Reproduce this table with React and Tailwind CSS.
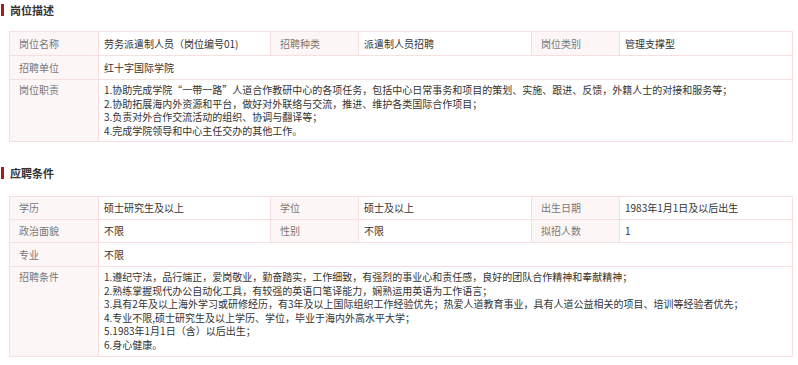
const font = "font-['Microsoft_YaHei','Noto_Sans_CJK_SC',sans-serif]";

function Title({ children }) {
  return (
    <div className="flex items-center h-5 pl-[1px]">
      <span className="w-[3px] h-3 bg-[#a51d1d]" />
      <span className="ml-[6px] text-[11px] font-bold text-[#333]">{children}</span>
    </div>
  );
}

function Label({ children, h, top }) {
  return (
    <div
      className={`flex ${top ? 'items-start pt-[3px]' : 'items-center'} pl-[9px] bg-[#fdf6f6] border-r border-b border-[#f8dfdf] text-[#777] ${h}`}
    >
      {children}
    </div>
  );
}

function Value({ children, h, span, top }) {
  return (
    <div
      className={`flex ${top ? 'flex-col pt-[3px]' : 'items-center'} pl-[5px] border-r border-b border-[#f8dfdf] text-[#333] ${h} ${span ? 'col-span-5' : ''}`}
    >
      {children}
    </div>
  );
}

const cols = "grid grid-cols-[89px_172px_88px_173px_88px_173px] ml-[9px] w-[784px] border-l border-t border-[#f8dfdf] text-[10px] leading-[13.5px]";

const duties = [
  '1.协助完成学院“一带一路”人道合作教研中心的各项任务，包括中心日常事务和项目的策划、实施、跟进、反馈，外籍人士的对接和服务等；',
  '2.协助拓展海内外资源和平台，做好对外联络与交流，推进、维护各类国际合作项目；',
  '3.负责对外合作交流活动的组织、协调与翻译等；',
  '4.完成学院领导和中心主任交办的其他工作。',
];

const reqs = [
  '1.遵纪守法，品行端正，爱岗敬业，勤奋踏实，工作细致，有强烈的事业心和责任感，良好的团队合作精神和奉献精神；',
  '2.熟练掌握现代办公自动化工具，有较强的英语口笔译能力，娴熟运用英语为工作语言；',
  '3.具有2年及以上海外学习或研修经历，有3年及以上国际组织工作经验优先；热爱人道教育事业，具有人道公益相关的项目、培训等经验者优先；',
  '4.专业不限,硕士研究生及以上学历、学位，毕业于海内外高水平大学；',
  '5.1983年1月1日（含）以后出生；',
  '6.身心健康。',
];

export default function App() {
  return (
    <div className={`w-[798px] h-[365px] bg-white overflow-hidden ${font}`}>
      <Title>岗位描述</Title>

      <div className={`mt-[11px] ${cols}`}>
        <Label h="h-6">岗位名称</Label>
        <Value h="h-6">劳务派遣制人员（岗位编号01)</Value>
        <Label h="h-6">招聘种类</Label>
        <Value h="h-6">派遣制人员招聘</Value>
        <Label h="h-6">岗位类别</Label>
        <Value h="h-6">管理支撑型</Value>

        <Label h="h-6">招聘单位</Label>
        <Value h="h-6" span>红十字国际学院</Value>

        <Label h="h-[62px]" top>岗位职责</Label>
        <Value h="h-[62px]" span top>
          {duties.map(d => <div key={d}>{d}</div>)}
        </Value>
      </div>

      <div className="mt-[21px]">
        <Title>应聘条件</Title>
      </div>

      <div className={`mt-[13px] ${cols}`}>
        <Label h="h-[23px]">学历</Label>
        <Value h="h-[23px]">硕士研究生及以上</Value>
        <Label h="h-[23px]">学位</Label>
        <Value h="h-[23px]">硕士及以上</Value>
        <Label h="h-[23px]">出生日期</Label>
        <Value h="h-[23px]">1983年1月1日及以后出生</Value>

        <Label h="h-[23px]">政治面貌</Label>
        <Value h="h-[23px]">不限</Value>
        <Label h="h-[23px]">性别</Label>
        <Value h="h-[23px]">不限</Value>
        <Label h="h-[23px]">拟招人数</Label>
        <Value h="h-[23px]">1</Value>

        <Label h="h-6">专业</Label>
        <Value h="h-6" span>不限</Value>

        <Label h="h-[90px]" top>招聘条件</Label>
        <Value h="h-[90px]" span top>
          {reqs.map(r => <div key={r}>{r}</div>)}
        </Value>
      </div>
    </div>
  );
}
